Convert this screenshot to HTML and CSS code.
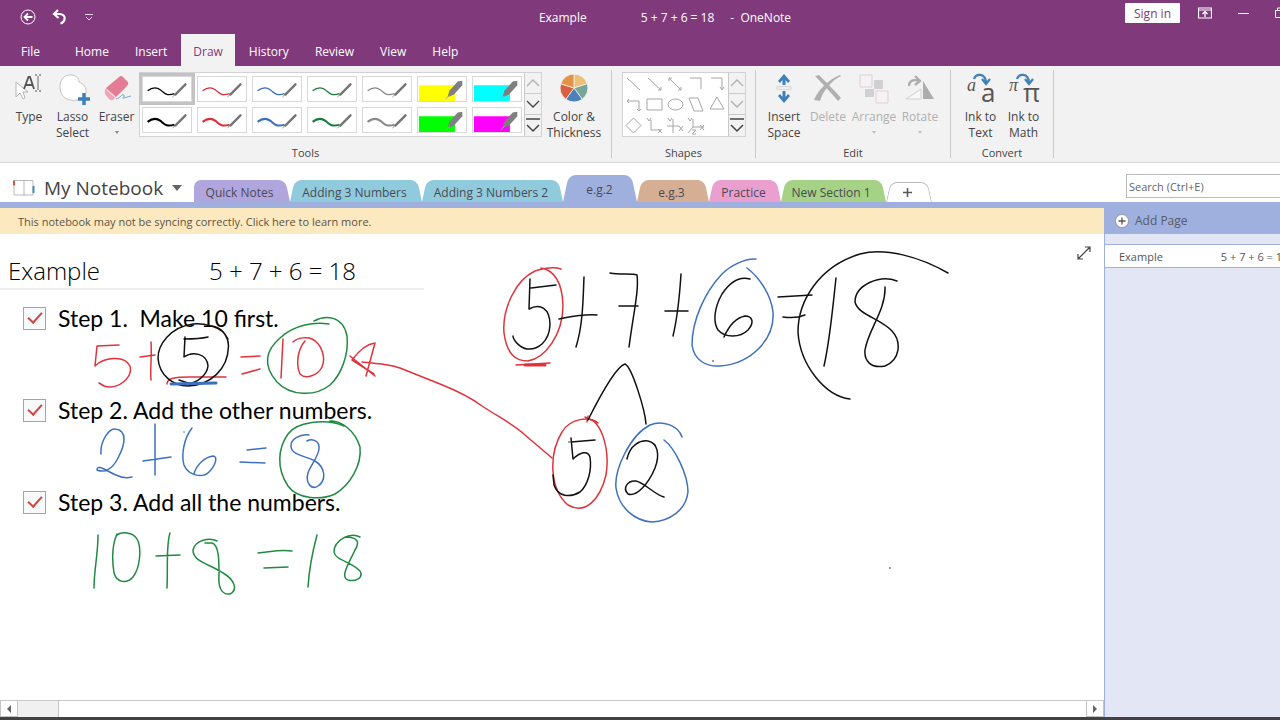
FILE: index.html
```html
<!DOCTYPE html>
<html lang="en">
<head>
<meta charset="utf-8">
<title>Example 5 + 7 + 6 = 18 - OneNote</title>
<link rel="stylesheet" href="styles.css">
</head>
<body>
<svg class="defs" aria-hidden="true">
  <symbol id="pen" viewBox="0 0 50 26"><path class="wave" d="M4 15C9 11 14 11 18 14S24 21 33 18"/><path class="tip" d="M31 22L34 18" /><path class="barrel" d="M34 19L45 8"/></symbol>
  <symbol id="marker" viewBox="0 0 50 26"><path class="fill" d="M0 9H39V26H0Z"/><path d="M31 22L33 15L42 5L47 4V9L38 19Z" fill="#7f7f7f"/><path d="M29 24L33 20" stroke="#aaa"/></symbol>
  <symbol id="up" viewBox="0 0 16 20"><path d="M2 13L8 7L14 13" fill="none" stroke="currentColor" stroke-width="1.300"/></symbol>
  <symbol id="down" viewBox="0 0 16 20"><path d="M2 7L8 13L14 7" fill="none" stroke="currentColor" stroke-width="1.300"/></symbol>
  <symbol id="more" viewBox="0 0 16 20"><path d="M1 3H15M2 9L8 15L14 9" fill="none" stroke="currentColor" stroke-width="1.500"/></symbol>
</svg>
<div class="window">
  <header class="titlebar">
    <div class="quick">
      <button aria-label="Back"><svg width="16" height="16" viewBox="0 0 16 16" fill="none" stroke="#fff"><circle cx="8" cy="8" r="7"/><path d="M12.500 8H5M8 4.500L4.500 8L8 11.500" stroke-width="1.800"/></svg></button>
      <button aria-label="Undo"><svg width="16" height="16" viewBox="0 0 16 16" fill="none" stroke="#fff" stroke-width="2.200"><path d="M6 1L2 5L6.500 9M2.500 5H7C11 5 13.500 7 12.500 10.500C12 12.500 10.500 14 8.500 14.500"/></svg></button>
      <button aria-label="Customize toolbar"><svg width="10" height="8" viewBox="0 0 10 8" fill="none" stroke="#e4cfe2"><path d="M1 1.500H9M2 4L5 7L8 4"/></svg></button>
    </div>
    <div class="caption"><span>Example</span><span class="caption-page">5 + 7 + 6 = 18</span><span class="caption-app">-&nbsp; OneNote</span></div>
    <div class="controls">
      <button class="signin">Sign in</button>
      <button aria-label="Ribbon display"><svg width="14" height="12" viewBox="0 0 14 12" fill="none" stroke="#fff"><path d="M.500 1H13.500V11H.500ZM.500 3H13.500" stroke-width="1.200"/><path d="M7 10V5M4.500 7L7 4.500L9.500 7" stroke-width="1.300"/></svg></button>
      <button aria-label="Minimize"><svg width="11" height="12" viewBox="0 0 11 12" stroke="#fff"><path d="M0 6.500H11"/></svg></button>
      <button aria-label="Restore"><svg width="11" height="12" viewBox="0 0 11 12" fill="none" stroke="#fff"><path d="M.500 3.500H8.500V10.500H.500ZM2.500 3V1H10.500V8H9"/></svg></button>
    </div>
  </header>
  <nav class="menu">
    <button class="file">File</button><button>Home</button><button>Insert</button><button class="active">Draw</button><button>History</button><button>Review</button><button>View</button><button>Help</button>
  </nav>
  <section class="ribbon">
    <div class="group tools">
      <div class="row">
        <button class="tool type"><svg width="30" height="30" viewBox="0 0 30 30"><path d="M2 10V25L6 21L9 27L11 26L9 20H14Z" fill="#fff" stroke="#b5b5b5"/><path d="M10 17L14.500 5H16L20 17M12 13H18" fill="none" stroke="#555" stroke-width="1.800"/><path d="M21 3H23M25 3H27M24 4V18M21 19H23M25 19H27" stroke="#888" stroke-width="1.300"/></svg>Type</button>
        <button class="tool lasso"><svg width="30" height="30" viewBox="0 0 30 30"><path d="M20 28C10 30 3 25 2 17C1 8 7 2 13 3C19 3 21 7 21 10C25 12 29 15 28 21" fill="#fff" stroke="#c4c4c4"/><path d="M26 21V33M20 27H32" stroke="#3f7fba" stroke-width="3.500"/></svg>Lasso<br>Select</button>
        <button class="tool eraser"><svg width="30" height="30" viewBox="0 0 30 30"><path d="M17 5Q19 3 21 5L26 10Q27 12 25 14L14 25L4 16Z" fill="#e57c96"/><path d="M4 16L14 25L11 28Q9 29 7 27L3 22Q2 19 4 16Z" fill="#f0a4b4"/><path d="M5 18L13 25" stroke="#fff" stroke-width=".8"/><path d="M14 27C17 27 21 21 22 23S19 27 22 26S25 25 29 24" fill="none" stroke="#70a4c8"/></svg>Eraser<i class="caret"></i></button>
        <div class="gallery">
          <div class="pens">
            <button class="pen black selected" aria-label="Black pen"><svg><use href="#pen"/></svg></button><button class="pen red" aria-label="Red pen"><svg><use href="#pen"/></svg></button><button class="pen blue" aria-label="Blue pen"><svg><use href="#pen"/></svg></button><button class="pen green" aria-label="Green pen"><svg><use href="#pen"/></svg></button><button class="pen gray" aria-label="Gray pen"><svg><use href="#pen"/></svg></button><button class="pen yellow" aria-label="Yellow highlighter"><svg><use href="#marker"/></svg></button><button class="pen cyan" aria-label="Cyan highlighter"><svg><use href="#marker"/></svg></button>
            <button class="pen black bold" aria-label="Thick black pen"><svg><use href="#pen"/></svg></button><button class="pen red bold" aria-label="Thick red pen"><svg><use href="#pen"/></svg></button><button class="pen blue bold" aria-label="Thick blue pen"><svg><use href="#pen"/></svg></button><button class="pen green bold" aria-label="Thick green pen"><svg><use href="#pen"/></svg></button><button class="pen gray bold" aria-label="Thick gray pen"><svg><use href="#pen"/></svg></button><button class="pen lime" aria-label="Green highlighter"><svg><use href="#marker"/></svg></button><button class="pen magenta" aria-label="Magenta highlighter"><svg><use href="#marker"/></svg></button>
          </div>
          <div class="scroller"><button class="dim" aria-label="Pens up"><svg><use href="#up"/></svg></button><button aria-label="Pens down"><svg><use href="#down"/></svg></button><button aria-label="More pens"><svg><use href="#more"/></svg></button></div>
        </div>
        <button class="tool color"><svg width="30" height="30" viewBox="-15 -16 30 30" stroke="#f2f2f2" stroke-width=".8"><path d="M0 0V-14A14 14 0 0 1 13.300-4.300Z" fill="#ecc078"/><path d="M0 0L13.300-4.300A14 14 0 0 1 8.200 11.300Z" fill="#76a797"/><path d="M0 0L8.200 11.300A14 14 0 0 1-8.200 11.300Z" fill="#4b80b8"/><path d="M0 0L-8.200 11.300A14 14 0 0 1-13.300-4.300Z" fill="#d95f43"/><path d="M0 0L-13.300-4.300A14 14 0 0 1 0-14Z" fill="#e49345"/></svg>Color &amp;<br>Thickness</button>
      </div>
      <div class="group-name">Tools</div>
    </div>
    <div class="group shapes">
      <div class="row">
        <div class="gallery">
          <svg class="shape-list" width="105" height="63" viewBox="0 0 105 63" fill="none" stroke="#a6a6a6" role="img" aria-label="Shapes">
            <path d="M4 5L17 17M25 5L38 17M35 17H38V14M46 5L58 17M46 8V5H49M55 17H58V14M67 5H78V16M88 5H99V16M97 14L99 17L101 14"/>
            <path d="M4 28H16V38M6 26L4 28L6 30M14 36L16 38L18 36M24 26H39V37H24ZM66 25H75L80 38H71ZM94 24L101 36H87Z"/><ellipse cx="52.500" cy="31.500" rx="7.500" ry="5.500"/>
            <path d="M10.500 45L18 52.500L10.500 60L3 52.500ZM28 47V57H38M24 45L26 48L28 45M35 56L39 60M39 56L35 60M50 46V60M44 53H56M45 45L47 48L49 45M56 53L60 58M60 53L56 58M70 46V54H81M70 54L65 60M65 45L67 48L69 45M77 52L81 57M81 52L77 57M69 57H73L69 61H73"/>
          </svg>
          <div class="scroller"><button class="dim" aria-label="Shapes up"><svg><use href="#up"/></svg></button><button class="dim" aria-label="Shapes down"><svg><use href="#down"/></svg></button><button aria-label="More shapes"><svg><use href="#more"/></svg></button></div>
        </div>
      </div>
      <div class="group-name">Shapes</div>
    </div>
    <div class="group edit">
      <div class="row">
        <button class="tool"><svg width="30" height="30" viewBox="0 0 30 30"><path d="M15 2L21 9L19 11L16.500 8V13H13.500V8L11 11L9 9ZM15 31L21 24L19 22L16.500 25V19H13.500V25L11 22L9 24Z" fill="#3f7fba"/><path d="M8 14.500H22V17.500H8Z" fill="#eee" stroke="#ccc" stroke-width=".7"/></svg>Insert<br>Space</button>
        <button class="tool" disabled><svg width="30" height="30" viewBox="0 0 30 30"><path d="M2 4L6 3C12 9 22 19 28 26L25 29C18 21 10 12 2 4ZM28 4C18 9 10 19 7 29L1 28C5 18 15 8 27 3Z" fill="#b0b0b0"/></svg>Delete</button>
        <button class="tool" disabled><svg width="30" height="30" viewBox="0 0 30 30"><path d="M15 8H24V17H15ZM6 17H15V25H6Z" fill="#d0d0d0"/><path d="M1 3H13V15H1ZM17 19H29V31H17Z" fill="#f6f1f4" stroke="#dccfd7"/></svg>Arrange<i class="caret"></i></button>
        <button class="tool" disabled><svg width="30" height="30" viewBox="0 0 30 30"><path d="M18 9V27H29Z" fill="#adadad"/><path d="M16 17V27H1Z" fill="#f8f8f8" stroke="#d0d0d0"/><path d="M4 14C4 9 8 7 14 9M10 4L15 9L10 13" fill="none" stroke="#adadad" stroke-width="2.300"/></svg>Rotate<i class="caret"></i></button>
      </div>
      <div class="group-name">Edit</div>
    </div>
    <div class="group convert">
      <div class="row">
        <button class="tool"><svg width="30" height="30" viewBox="0 0 30 30"><path d="M8 7C10 1 19 1 20 10M16 7L20 12L24 7" fill="none" stroke="#3f7fba" stroke-width="2.200"/><text class="script" x="1" y="19">a</text><text class="roman" x="15" y="30">a</text></svg>Ink to<br>Text</button>
        <button class="tool"><svg width="30" height="30" viewBox="0 0 30 30"><path d="M8 7C10 1 19 1 20 10M16 7L20 12L24 7" fill="none" stroke="#3f7fba" stroke-width="2.200"/><text class="script" x="0" y="19">π</text><text class="roman" x="14" y="30">π</text></svg>Ink to<br>Math</button>
      </div>
      <div class="group-name">Convert</div>
    </div>
  </section>
  <div class="notebook">
    <button class="book"><svg width="22" height="18" viewBox="0 0 22 18" fill="#fff" stroke="#b9b9b9"><path d="M1 1.500H20V16H1ZM11 1.500V17"/><path d="M0 2H1.500V6H0Z" fill="#d5553d" stroke="#d5553d"/><path d="M20.500 7V14" stroke="#478ab5" stroke-width="2"/></svg>My Notebook<i class="arrow"></i></button>
    <div class="sections">
      <button class="section violet">Quick Notes</button><button class="section teal">Adding 3 Numbers</button><button class="section teal second">Adding 3 Numbers 2</button><button class="section current">e.g.2</button><button class="section brown">e.g.3</button><button class="section pink">Practice</button><button class="section lime-tab">New Section 1</button><button class="section add" aria-label="New section"><svg width="9" height="9" viewBox="0 0 9 9" stroke="#555" stroke-width="1.500"><path d="M4.500 0V9M0 4.500H9"/></svg></button>
    </div>
    <input class="search" type="search" placeholder="Search (Ctrl+E)" aria-label="Search">
  </div>
  <main class="workspace">
    <div class="note">
      <button class="notice">This notebook may not be syncing correctly. Click here to learn more.</button>
      <article class="page">
        <h1 class="heading"><span>Example</span><span>5 + 7 + 6 = 18</span></h1>
        <label class="step"><input type="checkbox" checked><span>Step 1.&nbsp; Make 10 first.</span></label>
        <label class="step"><input type="checkbox" checked><span>Step 2. Add the other numbers.</span></label>
        <label class="step"><input type="checkbox" checked><span>Step 3. Add all the numbers.</span></label>
        <svg class="ink" width="1104" height="466" viewBox="0 234 1104 466" role="img" aria-label="Handwritten working">
          <g class="ink-red">
            <path d="M97 346L119 345M97 346L95 366C103 358 124 354 130 366C133 378 118 390 104 386L99 383M140 357L155 355M151 342C152 355 150 370 151 380M241 357L260 356M242 374L260 369M283 339L281 378M293 342C298 337 308 337 312 339C322 344 326 358 322 367C318 375 306 380 300 374C296 366 297 350 305 341"/>
            <path d="M167 384C167 378 175 377 190 377L226 377M350 356L375 376M375 343C366 344 358 352 352 360L374 374M375 343L366 376M362 362C375 363 390 364 400 368L440 384C460 392 470 397 482 406C500 418 515 425 525 435L552 458"/>
            <path d="M561 269C555 267 545 268 535 271C515 280 502 310 504 333C507 355 516 361 528 361C545 358 563 335 563 305C562 280 553 270 541 268M516 365L550 363"/><path class="thick" d="M525 365L545 365"/>
            <path d="M598 423C590 416 570 418 562 432C548 455 550 490 568 505C585 515 600 500 606 475C610 450 602 420 586 418M585 417L591 420M588 416L587 422"/>
          </g>
          <g class="ink-black">
            <path d="M228 339C222 325 200 323 193 324C170 327 158 345 158 358C159 375 173 386 188 386C210 385 228 370 228.500 346C228 334 220 327 212 326M184 339C192 339 200 339 208 337M185 337L184 357C192 351 207 353 208 366C207 376 195 384 188 383L179 380"/>
            <path d="M530 279L529 309C540 303 550 308 550 325C549 342 538 350 527 349C520 348 513 340 513 336M531 288L556 285M559 319C570 317 580 314 597 315M584 277C583 300 583 325 576 347M610 273C620 275 632 273 637 275C639 290 634 310 629 347M619 306L638 306M681 274C680 290 678 315 673 336M665 311L688 311"/>
            <path d="M588 420C598 400 615 367 625 364C632 367 645 410 646 424M571 438L573 459C580 452 588 450 590 457C592 470 588 485 580 492C570 498 558 497 554 485L553 475M571 442L595 440M627 459C630 445 640 440 648 441C658 443 660 455 655 468C648 485 636 497 628 494C622 488 628 480 636 481C645 483 655 495 664 497"/>
            <path d="M750 279C740 276 730 282 722 294C714 308 713 322 718 330C725 338 740 338 748 330C755 322 752 316 745 316C735 318 728 328 724 337M778 297L812 295M783 317C790 318 798 318 805 315M836 278C833 305 830 340 824 366M897 281C880 274 855 285 855 302C858 315 880 318 892 331C902 342 900 360 885 366C870 369 864 360 865 350C868 330 886 310 885 287"/>
            <path d="M948 273C920 257 885 247 860 254C820 266 798 300 798 332C800 365 825 396 850 399M713 361L713 361M890 568L890 568M569 442L569 442"/>
          </g>
          <g class="ink-blue">
            <path class="thick" d="M171 384L216 383"/>
            <path d="M101 454C100 440 110 428 115 429C128 430 125 445 118 458C112 470 104 473 97 470C97 463 108 472 116 475C122 478 128 478 132 477M143 461L171 457M155 424L155 475M192 428C184 438 181 455 184 465C188 475 202 479 209 472C216 465 218 456 213 456C205 457 196 465 194 474M184 432L184 432M247 450L266 448M240 462L265 463M309 435C300 434 290 439 291 447C292 455 305 456 315 461C325 467 327 480 318 486C312 490 305 484 308 473C310 466 320 455 319 447C319 441 312 438 307 441"/>
            <path d="M682 437C678 425 662 420 650 425C630 435 614 470 616 488C619 508 635 521 652 522C670 521 686 510 688 492C688 475 675 448 664 440M756 259C745 258 730 266 722 274C705 292 692 320 692 345C694 360 706 367 720 366C750 364 775 340 773 312C771 295 760 278 747 268"/>
          </g>
          <g class="ink-green">
            <path d="M314 321C325 315 343 315 347 336C349 355 341 375 330 385C315 397 290 396 277 382C262 365 266 350 280 338C295 324 315 322 329 324M330 421C340 420 355 430 360 447C362 465 350 485 335 494C322 500 298 500 288 486C276 468 278 448 288 434C296 422 325 418 344 426"/>
            <path d="M98 535C98 555 94 570 94 588M117 534C112 545 112 560 114 573C117 583 127 584 133 577C140 568 142 548 137 539C133 532 121 531 116 536M170 533C166 545 168 565 167 588M156 556L180 555M217 541C210 537 195 540 193 550C193 562 210 564 223 573C235 580 238 590 230 594C222 595 218 588 219 575C219 560 219 545 212 543L205 543M258 553C270 552 280 549 292 551M264 568L288 567M317 535C313 550 309 570 308 587M360 537C350 532 334 540 334 552C335 560 352 562 360 571C364 578 355 582 348 580C340 577 348 565 355 550C360 542 358 537 345 537"/>
          </g>
        </svg>
        <button class="expand" aria-label="Full page view"><svg width="14" height="14" viewBox="0 0 14 14" fill="none" stroke="#444" stroke-width="1.200"><path d="M1 13L13 1M8 1H13V6M1 8V13H6"/></svg></button>
      </article>
      <div class="hscroll"><button aria-label="Scroll left"><svg width="4" height="8" viewBox="0 0 4 8"><path d="M4 0V8L0 4Z" fill="#666"/></svg></button><div class="track"><div class="thumb"></div></div><button aria-label="Scroll right"><svg width="4" height="8" viewBox="0 0 4 8"><path d="M0 0V8L4 4Z" fill="#666"/></svg></button></div>
    </div>
    <aside class="pages">
      <button class="add-page"><svg width="14" height="14" viewBox="0 0 14 14"><circle cx="7" cy="7" r="6.500" fill="#fff" stroke="#777" stroke-width=".6"/><path d="M7 3.500V10.500M3.500 7H10.500" stroke="#555" stroke-width="1.300"/></svg>Add Page</button>
      <a class="page-link" href="#"><span>Example</span><span>5 + 7 + 6 = 18</span></a>
    </aside>
  </main>
  <footer class="edge"></footer>
</div>
</body>
</html>
```
FILE: styles.css
```css
* { box-sizing: border-box; }
body { margin: 0; overflow: hidden; font-family: "Open Sans", "Noto Sans", sans-serif; font-size: 12px; color: #444; }
button { margin: 0; padding: 0; border: 0; background: none; font: inherit; color: inherit; }
svg { display: block; flex: none; }
.defs { position: absolute; width: 0; height: 0; }
/* The window runs past the right edge of the screen. */
.window { display: flex; flex-direction: column; width: calc(100% + 50px); height: 100vh; background: #fff; }

.titlebar { display: grid; grid-template-columns: 1fr auto 1fr; align-items: center; height: 34px; background: #80397b; color: #fff; }
.quick { display: flex; align-items: center; gap: 16px; padding-left: 20px; }
.caption { display: flex; white-space: nowrap; }
.caption-page { margin-left: 54px; }
.caption-app { margin-left: 16px; }
.controls { display: flex; align-items: center; justify-content: flex-end; gap: 26px; padding-right: 44px; }
.controls button { margin-bottom: 8px; }
.signin { width: 55px; height: 20px; margin-right: -8px; border-radius: 1px; background: #fff; color: #80397b; }

.menu { display: flex; gap: 2px; height: 32px; background: #80397b; color: #fff; }
.menu button { padding: 2px 12px 0; }
.menu .file { width: 61px; padding: 2px 0 0; }
.menu .active { background: #f2f2f2; color: #80397b; }

.ribbon { display: flex; height: 97px; padding: 4px 0; background: #f2f2f2; border-bottom: 1px solid #d9d9d9; line-height: 16px; }
.group { display: flex; flex-direction: column; justify-content: space-between; border-right: 1px solid #c9c9c9; }
.row { display: flex; justify-content: center; align-items: flex-start; padding-top: 2px; }
.group-name { text-align: center; font-size: 11px; line-height: 10px; }
.tool { display: flex; flex-direction: column; align-items: center; text-align: center; }
.tool svg { margin-bottom: 7px; overflow: visible; }
.tool:disabled { color: #b0b0b0; }
.caret { width: 0; margin-top: 6px; border: 2px solid transparent; border-top: 3px solid #888; }
.tool:disabled .caret { border-top-color: #c0c0c0; }
.tools { width: 612px; }
.tools .row { justify-content: flex-start; }
.type { width: 42px; margin-left: 8px; }
.lasso { width: 45px; }
.eraser { width: 43px; margin-right: 1px; }
.color { width: 64px; }
.gallery { display: flex; border: 1px solid #d2d2d2; background: #fff; }
.pens { display: grid; grid-template-columns: repeat(7, 50px); gap: 5px; padding: 3px 2px; }
.pen { --line: 1.4; height: 26px; border: 1px solid #d8d8d8; background: #fff; fill: none; }
.pen svg { width: 48px; height: 24px; }
.pen.selected { outline: 3px solid #c3c3c3; }
.pen.bold { --line: 2.2; }
.black { --ink: #000; }
.red { --ink: #d93038; }
.blue { --ink: #3a6dbc; }
.green { --ink: #197b39; }
.gray { --ink: #888; }
.yellow { --ink: #ff0; }
.cyan { --ink: #0ff; }
.lime { --ink: #0f0; }
.magenta { --ink: #f0f; }
.wave { stroke: var(--ink); stroke-width: var(--line); }
.fill { fill: var(--ink); }
.tip { stroke: #999; }
.barrel { stroke: #757575; stroke-width: 2.6; stroke-linecap: round; }
.scroller { display: grid; grid-template-rows: 1fr 1fr 1fr; width: 17px; border-left: 1px solid #c9c9c9; background: #f2f2f2; }
.scroller button { border-bottom: 1px solid #c9c9c9; }
.scroller button:last-child { border-bottom: 0; }
.scroller svg { width: 16px; height: 20px; }
.dim { color: #b0b0b0; }
.shapes { width: 144px; }
.edit { width: 195px; }
.edit .tool { width: 46px; }
.edit .tool:first-child { width: 42px; }
.convert { width: 103px; }
.convert .tool { width: 43px; }
.script { font: italic 18px "Liberation Serif", serif; fill: #555; }
.roman { font: 26px "Open Sans", sans-serif; fill: #555; }

.notebook { display: flex; align-items: flex-end; height: 45px; border-bottom: 6px solid #a0b0de; }
.book { display: flex; align-items: center; gap: 9px; width: 194px; height: 28px; padding-left: 13px; font-size: 19px; white-space: nowrap; }
.arrow { width: 0; border: 5px solid transparent; border-top: 6px solid #666; border-bottom: 0; }
.sections { display: flex; align-items: flex-end; flex: 1; }
.section { position: relative; z-index: 0; height: 22px; padding: 3px 3px 0 0; white-space: nowrap; color: #4a4a55; }
.section::before, .section::after { content: ""; position: absolute; z-index: -1; top: 0; bottom: 0; background: var(--tab); }
.section::before { left: 0; right: 50%; border-radius: 7px 0 0 0; transform: skewX(-12deg); transform-origin: bottom; }
.section::after { left: 49%; right: 0; border-radius: 0 7px 0 0; transform: skewX(12deg); transform-origin: bottom; }
.violet { --tab: #b0a5dc; width: 96px; padding-right: 5px; }
.violet::before { transform: none; left: 0; }
.teal { --tab: #8fcbdc; width: 132px; }
.second { width: 141px; }
.current { --tab: #a0b0de; width: 74px; height: 27px; padding-right: 1px; padding-bottom: 2px; }
.brown { --tab: #d5ae94; width: 72px; }
.pink { --tab: #eb9fcf; width: 72px; }
.lime-tab { --tab: #a5d284; width: 105px; padding-right: 5px; }
.add { --tab: #fff; width: 46px; height: 20px; padding: 0 17px; }
.add::before { border: 1px solid #bbb; border-width: 1px 0 0 1px; }
.add::after { border: 1px solid #bbb; border-width: 1px 1px 0 0; }
.search { width: 204px; height: 24px; margin-bottom: 4px; padding: 0 2px; border: 1px solid #bbb; background: #fff; font: 11px "Open Sans", sans-serif; }
.search::placeholder { color: #666; }

.workspace { display: flex; flex: 1; min-height: 0; }
.note { display: flex; flex: 1; flex-direction: column; min-width: 0; }
.notice { height: 26px; padding-left: 18px; background: #fde9c0; font-size: 11px; text-align: left; color: #5b5345; }
.page { position: relative; flex: 1; min-height: 0; color: #000; font-family: Lato, sans-serif; }
.heading { display: flex; gap: 109px; width: 424px; height: 56px; margin: 0; padding: 20px 0 0 8px; border-bottom: 2px solid #eee; font: 300 24px/34px "Open Sans", sans-serif; white-space: nowrap; }
.step { display: flex; align-items: center; gap: 12px; width: fit-content; height: 32px; margin: 12px 0 60px 23px; font-size: 23px; }
.step + .step { margin-top: 0; }
.step input { appearance: none; display: grid; place-items: center; width: 23px; height: 23px; margin: 0; border: 1px solid #7eb1c6; background: #f7f9fb; }
.step input:checked::after { content: ""; width: 6px; height: 12px; margin-bottom: 4px; border: solid #d2453f; border-width: 0 2px 2px 0; transform: rotate(42deg); }
.ink { position: absolute; left: 0; top: 0; fill: none; stroke-width: 1.5; stroke-linecap: round; stroke-linejoin: round; pointer-events: none; }
.thick { stroke-width: 3; }
.ink-red { stroke: #dd343c; }
.ink-black { stroke: #111; }
.ink-blue { stroke: #3e70bf; }
.ink-green { stroke: #1f8a40; }
.expand { position: absolute; top: 12px; right: 13px; }
.hscroll { display: flex; height: 17px; border-top: 1px solid #c8c8c8; background: #f0f0f0; }
.hscroll button { display: grid; place-items: center; width: 18px; border: 1px solid #c4c4c4; border-top: 0; background: #fff; }
.track { flex: 1; padding-left: 40px; }
.thumb { height: 100%; border-left: 1px solid #c4c4c4; background: #fff; }
.pages { width: 226px; margin-top: -1px; border-left: 1px solid #a0b0de; background: #e3e7f5; }
.add-page { display: flex; align-items: center; gap: 6px; width: 100%; height: 27px; padding-left: 10px; background: #a0b0de; color: #565b6b; }
.page-link { display: flex; gap: 58px; height: 24px; margin-top: 10px; padding-left: 14px; align-items: center; border: solid #a0b0de; border-width: 1px 0; background: #fff; font-size: 11px; color: #555; text-decoration: none; white-space: nowrap; }
.edge { height: 3px; background: #444045; }
```
